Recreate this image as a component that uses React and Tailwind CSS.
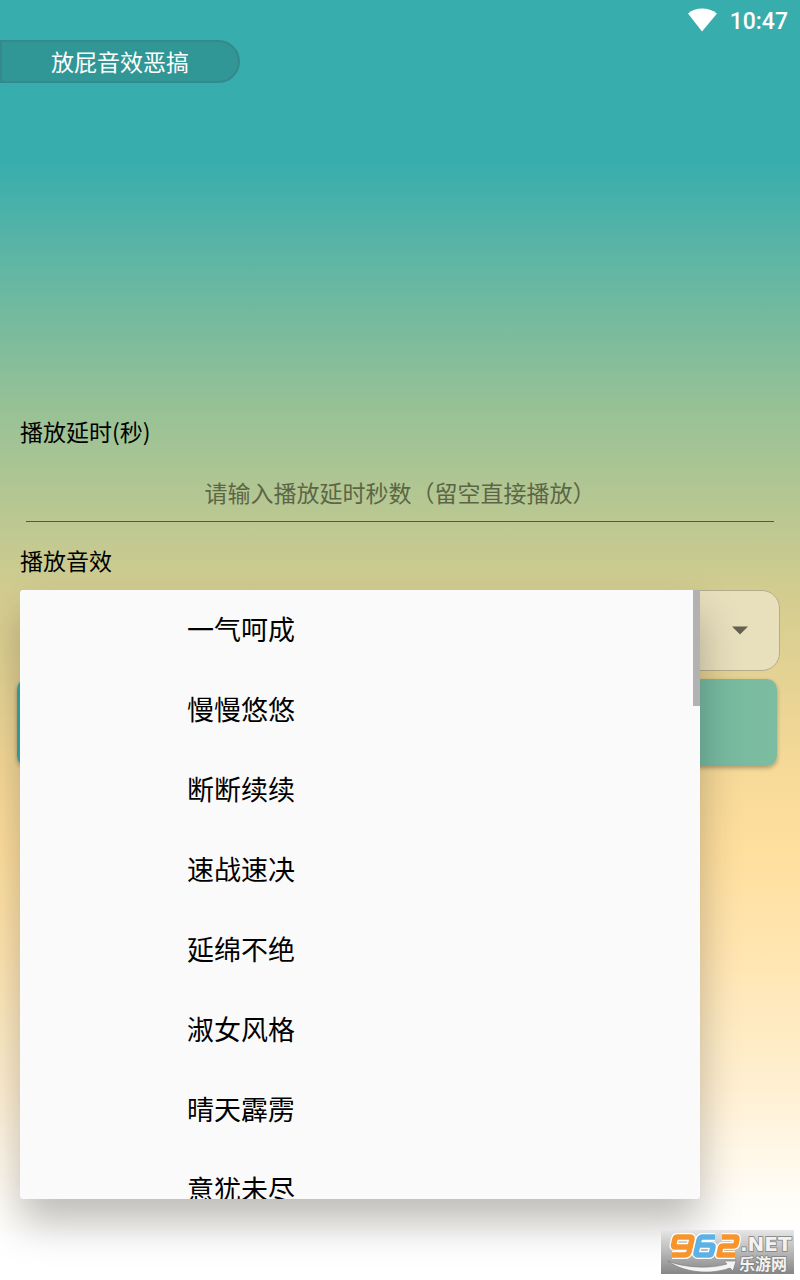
import { useState } from "react";

const sounds = [
  "一气呵成",
  "慢慢悠悠",
  "断断续续",
  "速战速决",
  "延绵不绝",
  "淑女风格",
  "晴天霹雳",
  "意犹未尽",
];

const StatusBar = () => (
  <div className="h-10 flex items-end justify-end gap-3 pr-3 text-white">
    <svg
      className="mb-2"
      width="30"
      height="24"
      viewBox="0 0 30 24"
      fill="currentColor"
    >
      <path d="M14 23.500 0 5.500C4 2 8.500 0.500 14 0.500S24.500 2 29 5.500Z" />
    </svg>
    <span className="font-[Roboto] text-[23px] leading-9 font-medium">
      10:47
    </span>
  </div>
);

const Watermark = () => (
  <svg
    className="absolute right-[6px] bottom-0"
    width="133"
    height="44"
    viewBox="0 0 133 44"
  >
    <defs>
      <linearGradient id="plate" x1="0" y1="0" x2="0" y2="1">
        <stop offset="0" stopColor="#e6e6e6" />
        <stop offset="0.5" stopColor="#b8b8b8" />
        <stop offset="1" stopColor="#868686" />
      </linearGradient>
    </defs>
    <rect width="133" height="44" fill="url(#plate)" />
    <path
      d="M7 31C23 38 50 39 66 34L63 31 75 31 72 41 69 38C50 45 23 43 7 31Z"
      fill="#f4f4f4"
      stroke="#777"
      strokeWidth="0.6"
    />
    <g fill="none" strokeLinejoin="round">
      <g stroke="#fff" strokeWidth="8">
        <path d="M28 17H14Q12 17 12.500 15L14 9Q14.500 7 16.500 7H29Q31.500 7 31 9L28 22Q27 25 24 25H11" />
        <path d="M54 7H42Q39 7 38 10L35 23Q34.500 25 37 25H48Q50 25 50.500 23L52 17Q52.500 15 50 15H37" />
        <path d="M61 7H74Q76.500 7 76 9L75 14Q74.500 16 72 16H62Q60 16 59.500 18L58 25H74" />
      </g>
      <g strokeWidth="5.500">
        <path
          d="M28 17H14Q12 17 12.500 15L14 9Q14.500 7 16.500 7H29Q31.500 7 31 9L28 22Q27 25 24 25H11"
          stroke="#f7942c"
        />
        <path
          d="M54 7H42Q39 7 38 10L35 23Q34.500 25 37 25H48Q50 25 50.500 23L52 17Q52.500 15 50 15H37"
          stroke="#5cb2e4"
        />
        <path
          d="M61 7H74Q76.500 7 76 9L75 14Q74.500 16 72 16H62Q60 16 59.500 18L58 25H74"
          stroke="#f7942c"
        />
      </g>
    </g>
    <g
      fill="#f2f2f2"
      stroke="#808080"
      strokeWidth="1.500"
      paintOrder="stroke"
      fontWeight="700"
    >
      <text x="79" y="21" fontSize="20" fontFamily="DejaVu Sans, sans-serif">
        .NET
      </text>
      <text
        x="78"
        y="40"
        fontSize="16"
        fontFamily="Noto Sans CJK SC, sans-serif"
      >
        乐游网
      </text>
    </g>
  </svg>
);

const SoundMenu = ({ selected, onSelect }) => (
  <div className="absolute top-0 left-0 right-20 h-[609px] rounded-[3px] bg-[#fafafa] shadow-[0_24px_42px_rgba(0,0,0,0.26)]">
    <div className="h-full overflow-hidden rounded-[3px]">
      <ul>
        {sounds.map((sound) => (
          <li key={sound}>
            <button
              type="button"
              aria-pressed={sound === selected}
              onClick={() => onSelect(sound)}
              className="block w-full h-20 pb-[2px] pl-[167px] text-left text-[27px] leading-[78px] text-black"
            >
              {sound}
            </button>
          </li>
        ))}
      </ul>
    </div>
    <div className="absolute top-0 right-0 w-[7px] h-[116px] bg-[#b2b2b2]"></div>
  </div>
);

const App = () => {
  const [delay, setDelay] = useState("");
  const [selected, setSelected] = useState(sounds[0]);

  return (
    <div className="relative min-h-[1274px] overflow-hidden bg-[linear-gradient(180deg,#38adae_0px,#38adae_160px,#94c196_400px,#d2cc8f_590px,#f6d998_765px,#ffdf9e_850px,#ffe5b0_950px,#fff0d2_1090px,#fffdf8_1200px,#ffffff_1240px)] font-['Noto_Sans_CJK_SC',sans-serif]">
      <StatusBar />

      <h1 className="w-60 h-[43px] border-2 border-[#36898a] rounded-r-full bg-[#309796] text-center text-[23px] leading-[38px] text-white">
        放屁音效恶搞
      </h1>

      <main className="mt-[331px] px-5 text-[23px]">
        <label htmlFor="delay" className="block leading-[34px] text-black">
          播放延时(秒)
        </label>
        <div className="mt-4 mx-[6px] border-b border-[#525b3c]">
          <input
            id="delay"
            value={delay}
            onChange={(e) => setDelay(e.target.value)}
            placeholder="请输入播放延时秒数（留空直接播放）"
            className="block w-full h-[57px] pb-[2px] bg-transparent text-center outline-none placeholder:text-[#5c6646]"
          />
        </div>
        <label
          htmlFor="sound"
          className="block mt-[21px] leading-[34px] text-black"
        >
          播放音效
        </label>

        <div className="relative mt-[13px]">
          <div className="relative">
            <select
              id="sound"
              value={selected}
              onChange={(e) => setSelected(e.target.value)}
              className="block appearance-none w-full h-[81px] pl-[167px] rounded-[18px] border border-[#b3ad8b] bg-[#e8dfbd]"
            >
              {sounds.map((sound) => (
                <option key={sound}>{sound}</option>
              ))}
            </select>
            <svg
              className="absolute right-8 top-9 pointer-events-none"
              width="16"
              height="9"
              viewBox="0 0 16 9"
            >
              <path d="M0 0.500H16L8 8.500Z" fill="#66624f" />
            </svg>
          </div>
          <button
            type="button"
            aria-label="播放"
            className="block -mx-[3px] mt-2 w-full h-[87px] rounded-[10px] bg-linear-to-r from-[#38adae] to-[#7cbca0] shadow-[0_2px_4px_rgba(0,0,0,0.3)]"
          ></button>
          <SoundMenu selected={selected} onSelect={setSelected} />
        </div>
      </main>

      <Watermark />
    </div>
  );
};

export default App;
